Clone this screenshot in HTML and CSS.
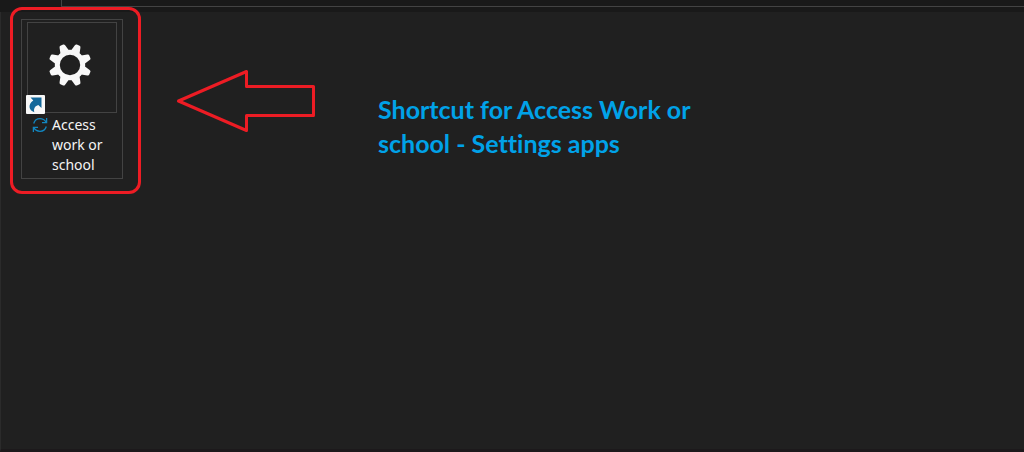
FILE: index.html
```html
<!DOCTYPE html>
<html lang="en">
<head>
<meta charset="utf-8">
<title>Access work or school</title>
<link rel="stylesheet" href="styles.css">
</head>
<body>
<header class="topbar"><div class="topbar-edge"></div></header>
<main class="pane">
  <div class="highlight">
    <button class="shortcut" type="button">
      <span class="thumb">
        <svg class="gear" viewBox="-22 -22 44 44" aria-hidden="true">
          <defs><path id="tooth" d="M-4.500-14-3-20Q-2.700-21.500-1.500-21.500H1.500Q2.700-21.500 3-20L4.500-14Z"/></defs>
          <g fill="#f8f8f8">
            <use href="#tooth" transform="rotate(22.5)"/>
            <use href="#tooth" transform="rotate(67.5)"/>
            <use href="#tooth" transform="rotate(112.5)"/>
            <use href="#tooth" transform="rotate(157.5)"/>
            <use href="#tooth" transform="rotate(202.5)"/>
            <use href="#tooth" transform="rotate(247.5)"/>
            <use href="#tooth" transform="rotate(292.5)"/>
            <use href="#tooth" transform="rotate(337.5)"/>
          </g>
          <circle r="12.7" fill="none" stroke="#f8f8f8" stroke-width="5"/>
        </svg>
        <svg class="badge" viewBox="0 0 19 19" aria-hidden="true">
          <rect width="19" height="19" rx="1" fill="#f8f8f8"/>
          <path d="M4.500 2.500H15.500V13L12.300 10C9.300 10.800 7.400 13.300 8.300 17.300C2.800 15.500 1.500 9.500 7.300 5.600Z" fill="#14689a"/>
        </svg>
      </span>
      <span class="caption">
        <svg class="sync" viewBox="0 0 16 16" aria-hidden="true">
          <g fill="none" stroke="#1286c0" stroke-width="1.3">
            <path d="M1.7 6.5C2.7 3.3 5.1 1.7 8 1.7C10.8 1.7 12.8 3 14.2 5.3M14.6 1V5.6H10"/>
            <path d="M14.3 9.5C13.3 12.7 10.9 14.3 8 14.3C5.2 14.3 3.2 13 1.8 10.7M1.4 15V10.4H6"/>
          </g>
        </svg>
        <span class="name">Access work or school</span>
      </span>
    </button>
  </div>
  <svg class="arrow" viewBox="0 0 140 64" aria-hidden="true">
    <path d="M2.500 32 70.500 2.500V17.500H137.500V46.500H70.500V61.500Z" fill="none" stroke="#ed1c24" stroke-width="3" stroke-linejoin="round"/>
  </svg>
  <p class="note">Shortcut for Access Work or school - Settings apps</p>
</main>
</body>
</html>
```
FILE: styles.css
```css
* { box-sizing: border-box; }
body {
  margin: 0;
  min-height: 100vh;
  display: flex;
  flex-direction: column;
  background: #202020;
}
.topbar {
  height: 12px;
  padding-left: 61px;
  background: #191919;
}
.topbar-edge {
  height: 7px;
  border-left: 1px solid #434343;
  border-bottom: 1px solid #434343;
}
.pane {
  flex: 1;
  display: flex;
  align-items: flex-start;
  padding-left: 9px;
  border-left: 1px solid #2b2b2b;
  border-bottom: 3px solid #1c191b;
}
.highlight {
  margin-top: -5px;
  padding: 9px 15px 12px 8px;
  border: 3px solid #ed1c24;
  border-radius: 12px;
}
.shortcut {
  display: block;
  width: 102px;
  margin: 0;
  padding: 2px 5px 2px 5px;
  border: 1px solid #434343;
  background: none;
  color: #f5f5f5;
  font: 14px/20px "Noto Sans", "Open Sans", sans-serif;
  text-align: left;
}
.thumb {
  position: relative;
  display: flex;
  align-items: center;
  justify-content: center;
  height: 91px;
  border: 1px solid #434343;
}
.gear { width: 44px; height: 44px; margin: 0 5px 5px 0; }
.badge {
  position: absolute;
  left: -2px;
  bottom: -2px;
  width: 19px;
  height: 19px;
}
.caption {
  display: flex;
  gap: 4px;
  padding: 2px 0 1px 5px;
}
.sync { flex: none; width: 16px; height: 16px; margin-top: 2px; }
.name { flex: 1; }
.arrow {
  flex: none;
  width: 140px;
  height: 64px;
  margin: 57px 0 0 35px;
}
.note {
  width: 340px;
  margin: 80px 0 0 62px;
  color: #00a2e8;
  font: bold 25px/34px Lato, sans-serif;
  font-variant-ligatures: none;
}
```
